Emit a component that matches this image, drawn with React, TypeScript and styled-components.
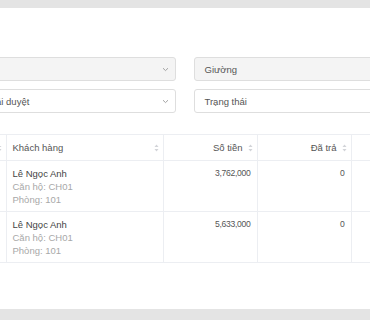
import { createGlobalStyle, styled } from "styled-components"

const GlobalStyle = createGlobalStyle`
  html, body {
    margin: 0;
    background: #e4e4e4;
    overflow: hidden;
    font-family: "Liberation Sans", Arial, sans-serif;
  }
`

const Page = styled.div`
  padding-top: 8px;
  height: 320px;
  box-sizing: border-box;
`

const Panel = styled.section`
  background: #fff;
  height: 301px;
  width: 540px;
  margin-left: -60px;
  padding: 49px 10px 0;
  box-sizing: border-box;
`

const Filters = styled.div`
  display: grid;
  grid-template-columns: 226px 226px;
  column-gap: 17.5px;
  row-gap: 8px;
`

const Field = styled.div<{ $disabled?: boolean }>`
  height: 24px;
  box-sizing: border-box;
  border: 1px solid #dedede;
  border-radius: 3px;
  background: ${p => (p.$disabled ? "#f4f4f4" : "#fff")};
  display: flex;
  align-items: center;
  justify-content: space-between;
  padding: 0 6px 0 10px;
  font-size: 9.5px;
  color: #555;
`

const Placeholder = styled.span`
  color: #999;
`

const Chevron = () => (
  <svg width="7" height="5" viewBox="0 0 7 5">
    <path d="M1 1.2 L3.5 3.6 L6 1.2" fill="none" stroke="#999" strokeWidth="0.9" />
  </svg>
)

const SortIcon = () => (
  <svg width="5" height="8" viewBox="0 0 5 8">
    <path d="M2.5 0.5 L4.5 3 H0.5 Z" fill="#d2d4d8" />
    <path d="M2.5 7.5 L4.5 5 H0.5 Z" fill="#d2d4d8" />
  </svg>
)

const Table = styled.table`
  margin-top: 21px;
  border-collapse: collapse;
  table-layout: fixed;
  width: 520px;
  font-size: 9.5px;
  color: #555;
`

const HeadCell = styled.th<{ $align?: string }>`
  height: 26px;
  box-sizing: border-box;
  padding: 0 4px 0 6px;
  font-weight: normal;
  border-top: 1px solid #eceef2;
  border-bottom: 1px solid #eceef2;
  border-right: 1px solid #eceef2;
  text-align: ${p => p.$align || "left"};
`

const HeadInner = styled.div<{ $align?: string }>`
  display: flex;
  align-items: center;
  gap: 5px;
  justify-content: ${p => (p.$align === "right" ? "flex-end" : "space-between")};
`

const Cell = styled.td<{ $align?: string }>`
  height: 51px;
  box-sizing: border-box;
  padding: 6px 6px 0;
  vertical-align: top;
  border-bottom: 1px solid #eceef2;
  border-right: 1px solid #eceef2;
  text-align: ${p => p.$align || "left"};
  line-height: 13px;
`

const Amount = styled(Cell)`
  font-size: 8.6px;
  letter-spacing: -0.3px;
`

const Name = styled.div`
  color: #444;
`

const Sub = styled.div`
  color: #a8a8a8;
`

const rows = [
  { name: "Lê Ngọc Anh", apt: "CH01", room: "101", amount: "3,762,000", paid: "0" },
  { name: "Lê Ngọc Anh", apt: "CH01", room: "101", amount: "5,633,000", paid: "0" },
]

export default function App() {
  return (
    <Page>
      <GlobalStyle />
      <Panel>
        <Filters>
          <Field $disabled>
            <Placeholder />
            <Chevron />
          </Field>
          <Field $disabled>
            <span>Giường</span>
          </Field>
          <Field>
            <span>Trạng thái duyệt</span>
            <Chevron />
          </Field>
          <Field>
            <span>Trạng thái</span>
          </Field>
        </Filters>
        <Table>
          <colgroup>
            <col style={{ width: 56 }} />
            <col style={{ width: 157 }} />
            <col style={{ width: 94 }} />
            <col style={{ width: 94 }} />
            <col />
          </colgroup>
          <thead>
            <tr>
              <HeadCell>
                <HeadInner $align="right">
                  <SortIcon />
                </HeadInner>
              </HeadCell>
              <HeadCell>
                <HeadInner>
                  <span>Khách hàng</span>
                  <SortIcon />
                </HeadInner>
              </HeadCell>
              <HeadCell $align="right">
                <HeadInner $align="right">
                  <span>Số tiền</span>
                  <SortIcon />
                </HeadInner>
              </HeadCell>
              <HeadCell $align="right">
                <HeadInner $align="right">
                  <span>Đã trả</span>
                  <SortIcon />
                </HeadInner>
              </HeadCell>
              <HeadCell />
            </tr>
          </thead>
          <tbody>
            {rows.map((r, i) => (
              <tr key={i}>
                <Cell />
                <Cell>
                  <Name>{r.name}</Name>
                  <Sub>Căn hộ: {r.apt}</Sub>
                  <Sub>Phòng: {r.room}</Sub>
                </Cell>
                <Amount $align="right">{r.amount}</Amount>
                <Amount $align="right">{r.paid}</Amount>
                <Cell />
              </tr>
            ))}
          </tbody>
        </Table>
      </Panel>
    </Page>
  )
}
